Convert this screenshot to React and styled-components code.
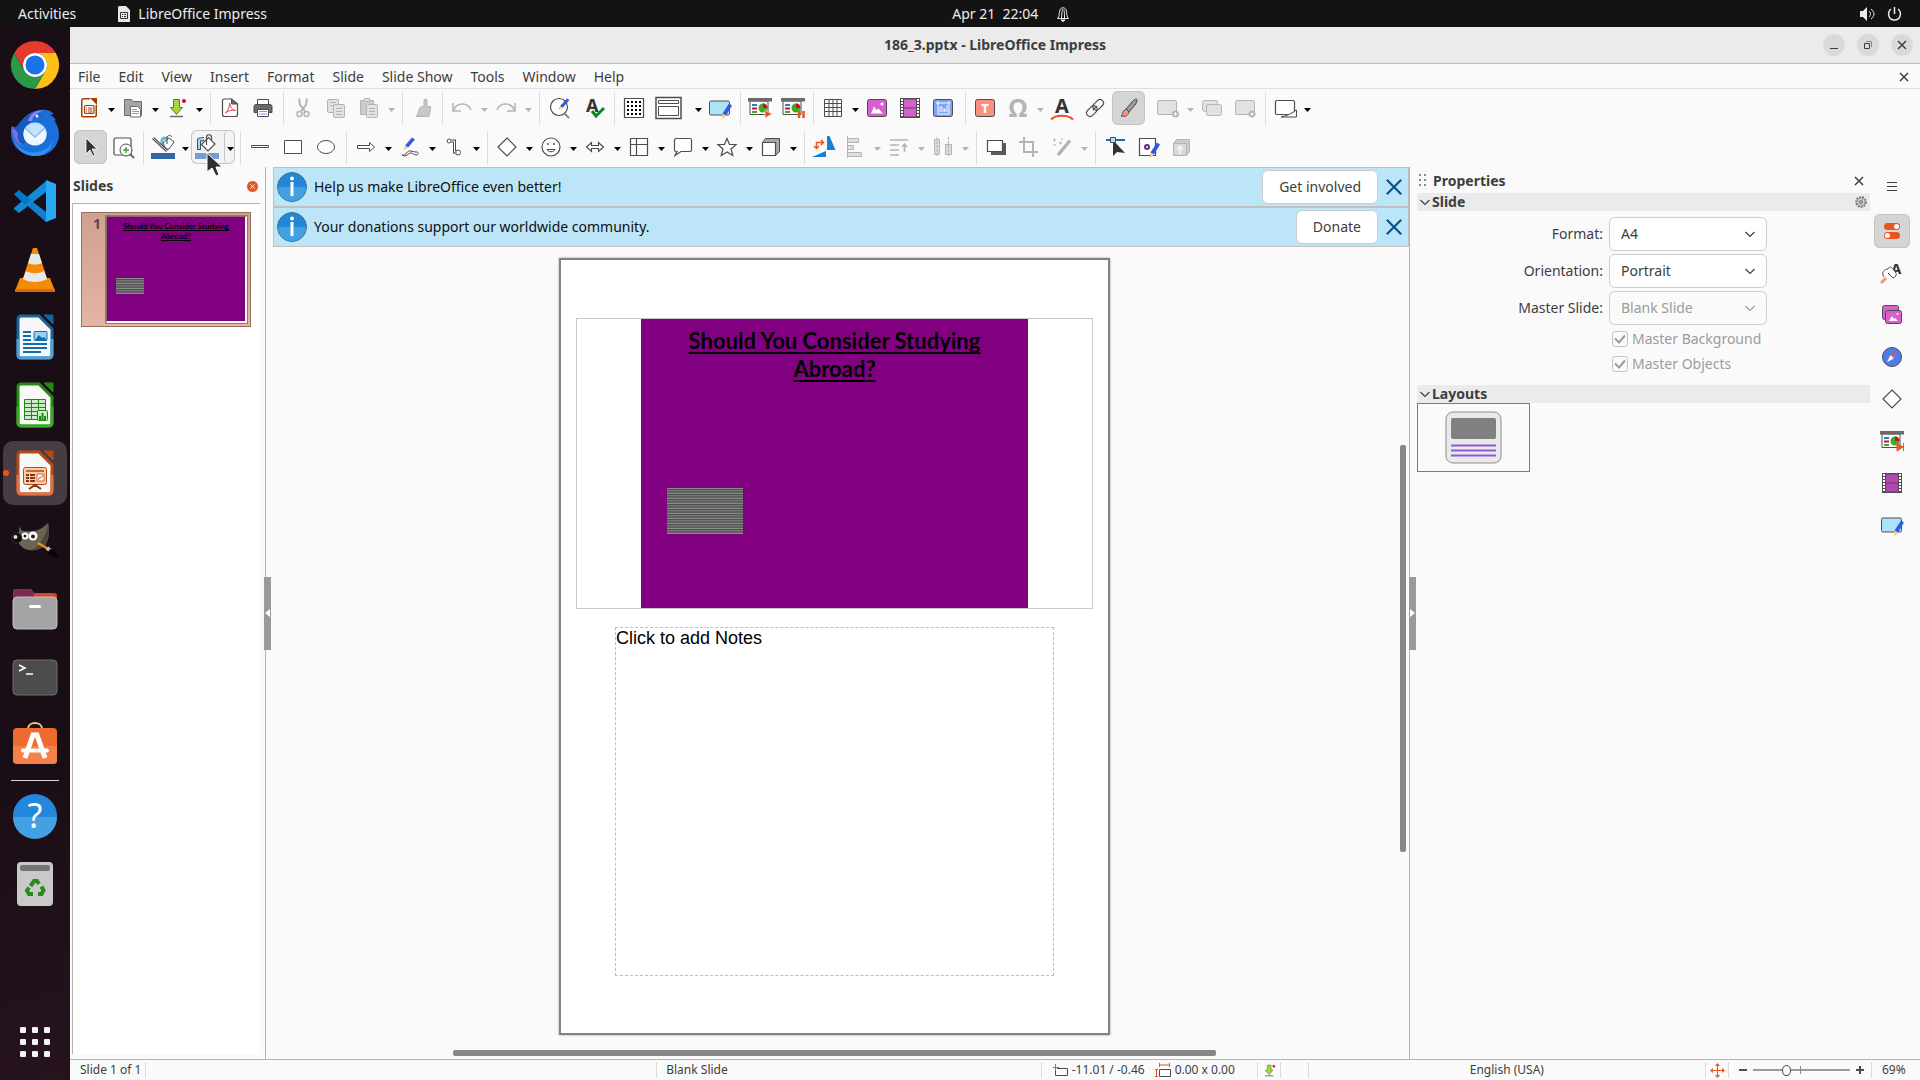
import { useState } from "react";
import styled, { createGlobalStyle, css } from "styled-components";

const GlobalStyle = createGlobalStyle`
  * {
    box-sizing: border-box;
  }

  body {
    margin: 0;
    overflow: hidden;
    background-color: #fafafa;
    color: #3d3d3d;
    font-family: "Noto Sans", "Open Sans", sans-serif;
    font-size: 14px;
    line-height: 20px;
  }

  button,
  select,
  input {
    margin: 0;
    padding: 0;
    border: none;
    background: none;
    color: inherit;
    font: inherit;
  }

  svg {
    display: block;
    flex: none;
    overflow: visible;
  }
`;

const Desktop = styled.div`
  display: flex;
  flex-direction: column;
  height: 100vh;
`;

const TopBar = styled.header`
  display: grid;
  grid-template-columns: 49.6% auto 1fr;
  align-items: center;
  height: 27px;
  background-color: #131313;
  color: #ececec;
`;

const TopLeft = styled.div`
  display: flex;
  align-items: center;
  gap: 42px;
  padding-left: 18px;
`;

const TopButton = styled.button`
  display: flex;
  align-items: center;
  gap: 8px;
`;

const Clock = styled.button`
  display: flex;
  align-items: center;
  gap: 18px;
  white-space: pre;
`;

const TopRight = styled.div`
  display: flex;
  justify-content: flex-end;
  gap: 12px;
  padding-right: 18px;
`;

const Workspace = styled.div`
  display: flex;
  flex: 1;
  min-height: 0;
`;

const Dock = styled.nav`
  display: flex;
  flex-direction: column;
  align-items: center;
  width: 70px;
  padding-top: 4px;
  background: linear-gradient(165deg, #1a0e16 70%, #26131f);
`;

const DockItem = styled.button`
  position: relative;
  display: grid;
  place-items: center;
  width: 64px;
  height: 64px;
  margin: 2px 0;
  border-radius: 10px;
  background-color: ${(props) => (props.$active ? "#463c42" : "transparent")};

  ${(props) =>
    props.$active &&
    css`
      &::before {
        content: "";
        position: absolute;
        left: 0;
        width: 6px;
        height: 6px;
        border-radius: 50%;
        background-color: #e95420;
      }
    `}
`;

const DockLine = styled.div`
  width: 48px;
  height: 1px;
  margin: 1px 0;
  background-color: #d8d8d8;
`;

const AppsButton = styled.button`
  display: grid;
  grid-template-columns: repeat(3, 6px);
  gap: 6px;
  margin-top: auto;
  margin-bottom: 23px;

  span {
    height: 6px;
    border-radius: 1px;
    background-color: #f2f2f2;
  }
`;

const Window = styled.main`
  display: flex;
  flex-direction: column;
  flex: 1;
  min-width: 0;
`;

const TitleBar = styled.div`
  display: grid;
  grid-template-columns: 1fr auto 1fr;
  align-items: center;
  height: 37px;
  border-bottom: 1px solid #bcbcbc;
  background-color: #ebebeb;
`;

const Title = styled.h1`
  grid-column: 2;
  margin: 0;
  font-size: 14px;
  font-weight: 700;
`;

const WindowButtons = styled.div`
  display: flex;
  justify-content: flex-end;
  gap: 12px;
  padding-right: 7px;
`;

const RoundButton = styled.button`
  display: grid;
  place-items: center;
  width: 22px;
  height: 22px;
  border-radius: 50%;
  background-color: #dadada;
`;

const MenuRow = styled.div`
  display: flex;
  align-items: center;
  height: 25px;
  padding: 1px 11px 0 0;
  border-bottom: 1px solid #dedede;
`;

const MenuButton = styled.button`
  padding: 0 9px;

  &:first-child {
    padding-left: 8px;
  }
`;

const CloseDoc = styled.button`
  margin-left: auto;
`;

const ToolRow = styled.div`
  display: flex;
  align-items: center;
  height: ${(props) => props.$height}px;
  padding-left: ${(props) => props.$start}px;
`;

const ToolButton = styled.button`
  display: flex;
  align-items: center;
  width: ${(props) => props.$width || 33}px;
  height: 34px;
  padding-left: 4px;
  border-radius: 6px;

  ${(props) =>
    props.$pressed &&
    css`
      background-color: #d5d5d5;
      box-shadow: inset 0 0 0 1px #c4c4c4;
    `}
`;

const ArrowButton = styled.button`
  display: grid;
  place-items: center;
  width: 11px;
  height: 34px;
  padding-top: 3px;
  color: ${(props) => (props.disabled ? "#b4b4b4" : "#000000")};
`;

const HoverPair = styled.div`
  display: flex;
  border-radius: 6px;
  background-color: #f3f3f3;
  box-shadow: inset 0 0 0 1px #c4c4c4;

  ${ArrowButton} {
    border-left: 1px solid #c4c4c4;
    border-radius: 6px;
  }
`;

const Separator = styled.div`
  width: 1px;
  height: 33px;
  margin: 0 3px;
  background-color: ${(props) => (props.$hidden ? "transparent" : "#dcdcdc")};

  ${ArrowButton} + &,
  ${HoverPair} + & {
    margin-left: 5px;
  }
`;

const Main = styled.div`
  display: flex;
  flex: 1;
  min-height: 0;
`;

const SlidePanel = styled.aside`
  display: flex;
  flex-direction: column;
  width: 194px;
  padding: 0 4px 5px 2px;
`;

const SlideHeader = styled.div`
  display: flex;
  justify-content: space-between;
  align-items: center;
  height: 36px;
  padding: 2px 2px 0 1px;
`;

const PanelTitle = styled.h2`
  margin: 0;
  font-size: 14px;
  line-height: 18px;
  font-weight: 700;
`;

const SlideList = styled.div`
  flex: 1;
  padding: 8px;
  border-top: 1px solid #b4b4b4;
  border-left: 1px solid #b4b4b4;
  background-color: #ffffff;
`;

const SlideItem = styled.button`
  display: flex;
  align-items: flex-start;
  justify-content: flex-end;
  width: 170px;
  height: 115px;
  padding: 3px 3px 0 0;
  border: 1px solid #9b6d60;
  background: linear-gradient(#d0a091, #e3b5a5);
`;

const SlideNumber = styled.span`
  padding-right: 5px;
  line-height: 16px;
  font-weight: 700;
  color: #5a4a46;
`;

const Thumb = styled.div`
  width: 141px;
  height: 107px;
  border: 1px solid #7e6a66;
  border-right: 2px solid #ffffff;
  border-bottom: 2px solid #ffffff;
  outline: 1px solid #8d7d79;
  background-color: #800080;
`;

const ThumbTitle = styled.div`
  padding: 4px 8px 0;
  font-family: Lato, sans-serif;
  font-size: 8px;
  line-height: 10px;
  font-weight: 700;
  text-align: center;
  text-decoration: underline;
  text-decoration-skip-ink: none;
  color: #000000;
`;

const Picture = styled.div`
  width: ${(props) => props.$width}px;
  height: ${(props) => props.$height}px;
  background: repeating-linear-gradient(
    #8a8a8a 0 1px,
    #505050 1px 2px,
    #767676 2px 3px,
    #606060 3px 5px
  );
`;

const ThumbPicture = styled(Picture)`
  margin: 37px 0 0 9px;
`;

const Splitter = styled.div`
  position: relative;
  display: flex;
  align-items: center;
  width: ${(props) => (props.$side === "left" ? 9 : 8)}px;

  &::before {
    content: "";
    position: absolute;
    top: 0;
    bottom: 0;
    left: ${(props) => (props.$side === "left" ? 1 : 0)}px;
    width: 1px;
    background-color: #b4b4b4;
  }
`;

const Grip = styled.button`
  position: relative;
  display: grid;
  place-items: center;
  width: 7px;
  height: 73px;
  background-color: #999999;
  color: #ffffff;
`;

const Editor = styled.section`
  display: flex;
  flex-direction: column;
  flex: 1;
  min-width: 0;
`;

const InfoBar = styled.div`
  display: flex;
  align-items: center;
  gap: 7px;
  height: 40px;
  padding: 0 5px 0 3px;
  border: 1px solid #c0c0c0;
  background-color: #bce5f7;
  color: #101010;
`;

const InfoText = styled.span`
  flex: 1;
`;

const InfoAction = styled.button`
  height: 34px;
  padding: 0 16px;
  border: 1px solid #cdcdcd;
  border-radius: 6px;
  background-color: #ffffff;
  color: #3d3d3d;
`;

const Canvas = styled.div`
  display: grid;
  grid-template-columns: 1fr 13px;
  grid-template-rows: 1fr 13px;
  flex: 1;
  min-height: 0;
`;

const PageArea = styled.div`
  display: grid;
  place-items: center;
  overflow: hidden;
`;

const Page = styled.article`
  width: 551px;
  height: 777px;
  padding: 58px 15px 0;
  border: 2px solid #828282;
  box-shadow: 0 0 2px #9a9a9a;
  background-color: #ffffff;
`;

const SlideFrame = styled.div`
  display: flex;
  justify-content: center;
  height: 291px;
  border: 1px solid #c9c9c9;
`;

const Slide = styled.div`
  width: 387px;
  background-color: #800080;
`;

const SlideTitle = styled.h3`
  margin: 0;
  padding: 8px 40px 0;
  font-family: Lato, sans-serif;
  font-size: 22px;
  line-height: 28px;
  font-weight: 700;
  text-align: center;
  text-decoration: underline;
  text-decoration-thickness: 2px;
  text-decoration-skip-ink: none;
  text-underline-offset: 3px;
  color: #000000;
`;

const SlidePicture = styled(Picture)`
  margin: 105px 0 0 26px;
`;

const Notes = styled.div`
  height: 349px;
  margin: 18px 39px 0;
  border: 1px dashed #bdbdbd;
  font-family: "Liberation Sans", Arial, sans-serif;
  font-size: 18px;
  color: #000000;
`;

const VerticalTrack = styled.div`
  display: flex;
  justify-content: center;

  div {
    width: 6px;
    height: 51%;
    margin-top: 198px;
    border-radius: 2px;
    background-color: #878787;
  }
`;

const HorizontalTrack = styled.div`
  display: flex;
  align-items: center;

  div {
    width: 68%;
    height: 6px;
    margin-left: 16%;
    border-radius: 2px;
    background-color: #878787;
  }
`;

const Properties = styled.aside`
  width: 453px;
  padding-top: 4px;
`;

const PropertiesHeader = styled.div`
  display: flex;
  align-items: center;
  height: 22px;
  padding: 0 6px 3px 2px;

  ${PanelTitle} {
    flex: 1;
    margin-left: 6px;
  }
`;

const SectionHeader = styled.div`
  display: flex;
  align-items: center;
  gap: 2px;
  height: 18px;
  padding: 0 3px;
  background-color: #ebebeb;

  ${PanelTitle} {
    flex: 1;
  }
`;

const Form = styled.div`
  display: grid;
  grid-template-columns: 186px 158px;
  column-gap: 6px;
  row-gap: 3px;
  align-items: center;
  padding: 6px 0 1px;
`;

const FieldLabel = styled.label`
  text-align: right;
`;

const SelectBox = styled.div`
  position: relative;
  color: ${(props) => (props.$disabled ? "#9c9c9c" : "#3d3d3d")};

  svg {
    position: absolute;
    top: 12px;
    right: 12px;
    pointer-events: none;
  }
`;

const Select = styled.select`
  appearance: none;
  width: 100%;
  height: 34px;
  padding: 0 11px;
  border: 1px solid #cdcdcd;
  border-radius: 6px;
  background-color: ${(props) => (props.disabled ? "#fafafa" : "#ffffff")};

  &:disabled {
    opacity: 1;
  }
`;

const Checks = styled.div`
  display: flex;
  flex-direction: column;
  gap: 5px;
  padding: 3px 0 11px 195px;
`;

const CheckLabel = styled.label`
  display: flex;
  align-items: center;
  gap: 4px;
  color: #9c9c9c;
`;

const CheckBox = styled.span`
  display: grid;
  place-items: center;

  input,
  svg {
    grid-area: 1 / 1;
  }

  input {
    appearance: none;
    width: 16px;
    height: 16px;
    border: 1px solid #c4c4c4;
    border-radius: 3px;
  }
`;

const LayoutTile = styled.button`
  display: grid;
  place-items: center;
  width: 113px;
  height: 69px;
  border: 1px solid #e95420;
`;

const TabBar = styled.nav`
  display: flex;
  flex-direction: column;
  align-items: center;
  gap: 8px;
  width: 50px;
  padding: 2px 6px 0 0;
`;

const TabButton = styled.button`
  display: grid;
  place-items: center;
  width: 36px;
  height: 34px;
  border-radius: 6px;

  &:first-child {
    margin-bottom: 3px;
  }

  ${(props) =>
    props.$active &&
    css`
      background-color: #d5d5d5;
      box-shadow: inset 0 0 0 1px #c4c4c4;
    `}
`;

const StatusBar = styled.footer`
  display: flex;
  align-items: center;
  height: 21px;
  border-top: 1px solid #b4b4b4;
  font-size: 12px;
`;

const Segment = styled.div`
  display: flex;
  align-items: center;
  justify-content: ${(props) => props.$align || "flex-start"};
  gap: 4px;
  flex: ${(props) => (props.$grow ? `${props.$grow} 1 0` : "none")};
  width: ${(props) => (props.$width ? `${props.$width}px` : "auto")};
  height: 16px;
  padding-left: ${(props) => props.$pad || 0}px;
  border-right: 1px solid ${(props) => (props.$open ? "transparent" : "#dcdcdc")};
  white-space: nowrap;
`;

const ZoomSlider = styled.input`
  appearance: none;
  width: 97px;
  height: 12px;
  margin: 0 2px;
  background:
    linear-gradient(#8a8a8a, #8a8a8a) 47px 2px / 1px 8px no-repeat,
    linear-gradient(#9a9a9a, #9a9a9a) 0 5px / 100% 2px no-repeat;

  &::-webkit-slider-thumb {
    appearance: none;
    width: 9px;
    height: 11px;
    border: 1px solid #4d4d4d;
    border-radius: 50%;
    background-color: #fafafa;
  }
`;

const Pointer = styled.svg`
  position: fixed;
  left: 206px;
  top: 152px;
  pointer-events: none;
`;

const dark = "#4d4d4d";

const Icon = ({ size = 24, width, children }) => (
  <svg
    width={width || size}
    height={size}
    viewBox={`0 0 ${width || 24} 24`}
    fill="none"
    stroke={dark}
    aria-hidden="true"
  >
    {children}
  </svg>
);

const Pencil = () => (
  <g stroke="none">
    <path d="M21 7.500l3 2-6 10-3.500-2z" fill="#2d5be3" />
    <path d="M14.500 17.500l3.500 2-4 4z" fill="#fcc98a" />
  </g>
);

const Board = ({ children }) => (
  <>
    <path d="M2 5v13.500h18V5z" fill="#ffffff" />
    <path d="M0 2h24v3.500H0z" fill="#6b6b6b" stroke="none" />
    <g stroke="none">
      <path d="M4 8h5v2H4z" fill="#1a7fd5" />
      <path d="M4 11.500h5v2H4z" fill="#c8102e" />
      <path d="M4 15h5v2H4z" fill="#43a820" />
      <circle cx="15" cy="12" r="4.500" fill="#43a820" />
      <path d="M15 12V7.500a4.500 4.500 0 0 1 4.500 4.500z" fill="#c8102e" />
    </g>
    {children}
  </>
);

const Film = ({ fill }) => (
  <>
    <path d="M2 2h20v20H2z" fill={dark} stroke="none" />
    <path d="M6 3.500h12v8H6zM6 12.500h12v8H6z" fill={fill} stroke="none" />
    <path d="M4 3v18M20 3v18" stroke="#ffffff" strokeWidth="2" strokeDasharray="2 1" />
  </>
);

const icons = {
  newDoc: (
    <g stroke="#a33e03" strokeWidth="1.500">
      <path d="M6.500 3h8l5 5v12.500h-13l-2-1V4z" fill="#fff" stroke="none" />
      <path d="M13 2.750H6.500a1.750 1.750 0 0 0-1.750 1.750v14.500a1.750 1.750 0 0 0 1.750 1.750h11a1.750 1.750 0 0 0 1.750-1.750V9" />
      <path d="M13 2h7v7z" fill="#a33e03" stroke="none" />
      <rect x="7.500" y="9.500" width="9.500" height="8" rx="1" strokeWidth="1.200" />
      <path d="M9 12h1m1 0h4.500M9 14h1m1 0h4.500M9 16h1m1 0h4.500" strokeWidth="1" />
    </g>
  ),
  open: (
    <>
      <path d="M3.500 19.500h17v-14h-8l-2-2h-7z" fill="#a6a6a6" stroke="#6b6b6b" />
      <path d="M9.500 10.500h7l3 3v7.500h-10z" fill="#ffffff" stroke="#6b6b6b" />
      <path d="M11 13.500h5M11 15.500h7M11 17.500h7" stroke="#8d8dff" />
    </>
  ),
  save: (
    <>
      <path d="M8.500 3.500h6v8h3l-6 7-6-7h3z" fill="#a5d63f" stroke="#5f7a2c" />
      <path d="M5 20.500h13" stroke="#6b6b6b" strokeWidth="1.500" />
      <circle cx="19" cy="5" r="2" fill="#c8102e" stroke="none" />
    </>
  ),
  pdf: (
    <>
      <path d="M13.500 3h-7a2 2 0 0 0-2 2v13.500a2 2 0 0 0 2 2h11a2 2 0 0 0 2-2V8z" fill="#ffffff" strokeWidth="1.200" />
      <path d="M13.500 3v5h6z" fill="#6b6b6b" />
      <path d="M11.500 7c1.500 5 3 7 6 7.500-3-1-7 0-10 2.500 3-3 4-6 4-10z" stroke="#ea3a50" />
    </>
  ),
  print: (
    <>
      <path d="M6.500 3.500h11v6h-11z" fill="#ffffff" />
      <path d="M5 8.500h14a2 2 0 0 1 2 2v6H3v-6a2 2 0 0 1 2-2z" fill="#6b6b6b" />
      <path d="M6.500 13.500h11v7h-11z" fill="#ffffff" />
      <path d="M8 15.500h8M8 18h8" stroke="#8d8dff" strokeWidth="1.200" />
    </>
  ),
  cut: (
    <g stroke="#b4b4b4" strokeWidth="1.500">
      <path d="M8 2.500l1 6 5 7M16 2.500l-1 6-5 7" strokeWidth="2" />
      <circle cx="8.500" cy="18" r="2.500" />
      <circle cx="15.500" cy="18" r="2.500" />
    </g>
  ),
  copy: (
    <g stroke="#b4b4b4" fill="#e2e2e2">
      <rect x="3.500" y="3.500" width="11" height="13" rx="1.500" />
      <rect x="9.500" y="8.500" width="11" height="13" rx="1.500" />
      <path d="M6 6.500h6M6 9.500h3M12 12.500h6M12 15.500h6M12 18.500h6" />
    </g>
  ),
  paste: (
    <g stroke="#b4b4b4" fill="#e2e2e2">
      <path d="M3.500 4.500h13v14h-13z" fill="#cccccc" />
      <path d="M7.500 2.500h5v3h-5z" />
      <rect x="9.500" y="8.500" width="11" height="13" rx="1" />
      <path d="M12 12.500h6M12 15.500h6M12 18.500h6" />
    </g>
  ),
  brush: (
    <path d="M14 3.500h3v7h3.500v3l-1.500 7H6c2-2 3-5 3-7l2-3h3z" fill="#c8c8c8" stroke="#b4b4b4" />
  ),
  undo: <path d="M3 7v8h8M3.500 14.500C6 7 17 5 21 14" stroke="#b4b4b4" strokeWidth="1.600" />,
  redo: <path d="M21 7v8h-8M20.500 14.500C18 7 7 5 3 14" stroke="#b4b4b4" strokeWidth="1.600" />,
  find: (
    <>
      <circle cx="12" cy="11" r="8.500" fill="#ffffff" strokeWidth="1.200" />
      <path d="M17 17l5 5" stroke="#8a8a8a" strokeWidth="2" />
      <path d="M20 2.500l2.500 1.500-7 8-2.500-2z" fill="#2d5be3" stroke="none" />
      <path d="M13 10l2.500 2-4.500 2z" fill="#fcc98a" stroke="none" />
    </>
  ),
  spell: (
    <>
      <text x="4" y="16" fontSize="18" fontWeight="700" fill="#333333" stroke="none">A</text>
      <path d="M10 15l4 5 8-8" stroke="#0b8a24" strokeWidth="3" />
    </>
  ),
  grid: (
    <>
      <path d="M2.500 2.500h19v19h-19z" fill="#ffffff" strokeWidth="1.200" />
      <path d="M5 6h15M5 10h15M5 14h15M5 18h15" stroke="#000000" strokeWidth="2" strokeDasharray="2 2" />
    </>
  ),
  display: (
    <>
      <path d="M1 1.500h25v21H1z" fill="#ffffff" strokeWidth="1.500" />
      <path d="M3.500 4.500h20v3h-20zM3.500 10.500h20v9h-20z" />
    </>
  ),
  master: (
    <>
      <rect x="1.500" y="5" width="20" height="14" rx="1.500" fill="#ace3f8" />
      <Pencil />
    </>
  ),
  play: (
    <Board>
      <path d="M17 14v8l7-4z" fill="#e95420" stroke="#fafafa" strokeWidth="0.500" />
    </Board>
  ),
  pause: (
    <Board>
      <path d="M18 15v7M22.500 15v7" stroke="#e95420" strokeWidth="2.500" />
    </Board>
  ),
  table: (
    <path d="M3.500 3.500h17v17h-17zM8 3v18M12 3v18M16 3v18M3 7.500h18M3 11.500h18M3 15.500h18" />
  ),
  image: (
    <>
      <rect x="2.500" y="3.500" width="19" height="17" rx="2" fill="#d75fcf" />
      <path d="M6 17.500l3-7 2.500 3.500 2-1.500 4.500 5z" fill="#ffffff" stroke="none" />
      <circle cx="17" cy="8" r="1.500" fill="#ffffff" stroke="none" />
    </>
  ),
  media: <Film fill="#d75fcf" />,
  chart: (
    <>
      <rect x="2.500" y="3.500" width="19" height="17" rx="2" fill="#7ea2f5" />
      <path d="M5 7h14M7 5v13h12M18 5v12M9 16v-5h2v5M13 16v-3h1v3M16 16V9" stroke="#ffffff" />
    </>
  ),
  textbox: (
    <>
      <rect x="2.500" y="3.500" width="19" height="17" rx="2" fill="#fb9080" />
      <text x="12" y="16.500" fontSize="13" fontWeight="800" textAnchor="middle" fill="#ffffff" stroke="none">T</text>
    </>
  ),
  omega: (
    <text x="12" y="21" fontSize="25" fontWeight="700" textAnchor="middle" fill="#b4b4b4" stroke="none">Ω</text>
  ),
  fontwork: (
    <>
      <text x="12" y="17" fontSize="20" fontWeight="700" textAnchor="middle" fill="#333333" stroke="none">A</text>
      <path d="M1 23.500c5-5 17-5 22 0" stroke="#e95420" strokeWidth="2" />
    </>
  ),
  link: (
    <g transform="rotate(-45 12 12)" strokeWidth="1.200">
      <rect x="1.500" y="8.500" width="12" height="7" rx="3.500" />
      <rect x="10.500" y="8.500" width="12" height="7" rx="3.500" />
      <path d="M9 12h6" />
    </g>
  ),
  draw: (
    <>
      <path d="M20 3c2 0 1 3-1 6l-6 7-3-3 6-7c2-2 3-3 4-3z" fill="#9a9a9a" />
      <path d="M10 13l3 3c-1 4-4 5-8 4 2-1 1-5 5-7z" fill="#fb9080" />
    </>
  ),
  newSlide: (
    <g stroke="#b4b4b4">
      <rect x="1.500" y="4.500" width="19" height="14" rx="1.500" fill="#e2e2e2" />
      <circle cx="19.500" cy="18" r="3.500" fill="#b4b4b4" stroke="none" />
      <path d="M17.500 18h4M19.500 16v4" stroke="#ffffff" />
    </g>
  ),
  duplicate: (
    <g stroke="#b4b4b4" fill="#e2e2e2">
      <rect x="2.500" y="4.500" width="15" height="11" rx="2" />
      <rect x="6.500" y="8.500" width="15" height="11" rx="2" />
    </g>
  ),
  deleteSlide: (
    <g stroke="#b4b4b4">
      <rect x="2.500" y="4.500" width="19" height="14" rx="1.500" fill="#e2e2e2" />
      <circle cx="19" cy="18" r="3.500" fill="#b4b4b4" stroke="none" />
      <path d="M17.500 16.500l3 3M20.500 16.500l-3 3" stroke="#ffffff" />
    </g>
  ),
  layout: (
    <>
      <rect x="2.500" y="4.500" width="19" height="14" rx="1.500" fill="#ffffff" strokeWidth="1.200" />
      <path d="M8 21c6-1 11-4 15.500-7v7z" fill="#fafafa" />
    </>
  ),
  select: (
    <path d="M8 3v16l4-4 3 6 2-1-3-6h5z" fill="#333333" stroke="#ffffff" strokeWidth="0.800" />
  ),
  zoom: (
    <>
      <rect x="3" y="3" width="17" height="17" rx="1.500" fill="#ffffff" strokeWidth="1.200" />
      <circle cx="15" cy="15" r="6" fill="#fafafa" />
      <path d="M19 19l4 4" stroke="#6b6b6b" strokeWidth="2" />
      <path d="M12 15h6M15 12v6" stroke="#43a820" strokeWidth="1.500" />
    </>
  ),
  lineColor: (
    <>
      <path d="M11 12V5c0-2 2-2 6-2" stroke="#6ab6d8" strokeWidth="3" />
      <path d="M12 8l6-5 5 4-5 7h-3z" fill="#ffffff" />
      <path d="M16 9V2c1-2 4-2 5 0" />
      <path d="M2 3l14 13" stroke={dark} strokeWidth="3" />
      <path d="M2 3l14 13" stroke="#d8d8d8" strokeWidth="1" />
      <path d="M0 18h24v6H0z" fill="#3465a4" stroke="none" />
    </>
  ),
  fillColor: (
    <>
      <path d="M4 15V5c1-1 3-1 5-1" stroke={dark} strokeWidth="4" />
      <path d="M4 14V5c1-1 3-1 5-1" stroke="#9fdcf5" strokeWidth="2" />
      <path d="M6.500 9.500l7-7 6.500 6.500-7 7z" fill="#ffffff" strokeWidth="1.200" />
      <path d="M11.500 10V2c0-3 5-3 5 0v3" strokeWidth="1.200" />
      <path d="M0 18h24v6H0z" fill="#729fcf" stroke="none" />
    </>
  ),
  line: <path d="M3.500 10.500h17v2h-17z" fill="#ffffff" />,
  rect: <path d="M3.500 5.500h17v13h-17z" fill="#ffffff" />,
  ellipse: <ellipse cx="12" cy="12" rx="8.500" ry="6.500" fill="#ffffff" />,
  arrowLine: <path d="M3.500 10.500h12v-3l5 4.500-5 4.500v-3h-12z" fill="#ffffff" />,
  curve: (
    <>
      <path d="M14 2.500l3 2-7 8-3-2z" fill="#2d5be3" stroke="none" />
      <path d="M7 10.500l3 2-5 3z" fill="#fcc98a" stroke="none" />
      <path d="M4 20c5 1 4-5 9-4 3 1 5 1 6 1s2 2 0 3c-4 0-5-3-7-2-3 2-5 4-8 2z" fill="#ffffff" />
    </>
  ),
  connector: (
    <>
      <circle cx="7" cy="6" r="2" fill="#ffffff" />
      <circle cx="16" cy="17.500" r="2.500" fill="#ffffff" />
      <path d="M9 6h3.500v11h2" strokeWidth="3" />
      <path d="M9 6h3.500v11h2" stroke="#ffffff" />
    </>
  ),
  diamond: <path d="M12 3l9 9-9 9-9-9z" fill="#ffffff" strokeWidth="1.200" />,
  smile: (
    <>
      <circle cx="12" cy="12" r="9" fill="#ffffff" strokeWidth="1.200" />
      <path d="M9 8v2M15 8v2" strokeWidth="1.500" />
      <path d="M8 14.500h8c-1 3-7 3-8 0z" />
    </>
  ),
  doubleArrow: (
    <path d="M3.500 12l5-4.500v3h7v-3l5 4.500-5 4.500v-3h-7v3z" fill="#ffffff" strokeWidth="1.200" />
  ),
  flow: <path d="M3.500 3.500h17v17h-17zM9.500 3.500v17M3.500 9.500h17" fill="#ffffff" strokeWidth="1.200" />,
  callout: (
    <path d="M5 3.500h14a1.500 1.500 0 0 1 1.500 1.500v10a1.500 1.500 0 0 1-1.500 1.500h-9l-6 4 2-4H5A1.500 1.500 0 0 1 3.500 15V5A1.500 1.500 0 0 1 5 3.500z" fill="#ffffff" strokeWidth="1.200" />
  ),
  star: (
    <path d="M12 3.500l2.500 6h6.500l-5 4.500 1.800 6.500L12 17l-5.800 3.500L8 14 3 9.500h6.500z" fill="#ffffff" strokeWidth="1.200" />
  ),
  cube: (
    <>
      <path d="M3.500 7.500l3-4h14v13l-4 4z" fill="#a6a6a6" />
      <path d="M3.500 7.500h13v13h-13z" fill="#ffffff" strokeWidth="1.200" />
    </>
  ),
  rotate: (
    <g stroke="none">
      <path d="M15 1h2.500l6 14H15z" fill="#1a7fd5" />
      <path d="M0 22l14-6v6z" fill="#1a7fd5" />
      <path d="M4.500 13V7.500H11M9 5l2.500 2.500L9 10M2 11l2.500 2.500L7 11" stroke="#e95420" strokeWidth="1.500" />
    </g>
  ),
  align: (
    <g stroke="#b4b4b4" fill="#dcdcdc">
      <path d="M4.500 1v22" />
      <path d="M4.500 3.500h11v4h-11zM4.500 10.500h6v4h-6zM4.500 17.500h14v4h-14z" />
    </g>
  ),
  arrange: (
    <path d="M3 5h18M3 10h9M3 15h9M3 20h9M17.500 17V9.500M15 12l2.500-3 2.500 3" stroke="#b4b4b4" strokeWidth="1.600" />
  ),
  distribute: (
    <g stroke="#b4b4b4" fill="#dcdcdc">
      <path d="M3.500 4.500h5v15h-5zM14.500 9.500h6v10h-6z" />
      <path d="M6 2v20M17.500 2v20" strokeDasharray="3 1" />
    </g>
  ),
  shadow: (
    <>
      <path d="M7 8h15v12H7z" fill="#5a5a5a" stroke="none" />
      <path d="M3.500 5.500h15v11h-15z" fill="#ffffff" strokeWidth="1.200" />
    </>
  ),
  crop: <path d="M7 2v15h14M2 7h14v15" stroke="#b4b4b4" strokeWidth="2" />,
  filter: (
    <>
      <path d="M20 5.500L8 20" stroke="#b4b4b4" strokeWidth="3.500" />
      <path d="M3 5h3M4.500 3.500v3M9 8h3M10.500 6.500v3M3 10h3M12 3v2" stroke="#b4b4b4" />
    </>
  ),
  points: (
    <>
      <path d="M3 5h19" stroke="#1c6ea4" strokeWidth="2" />
      <path d="M10 5v16l4-4 8 1z" fill="#333333" stroke="none" />
      <path d="M7.500 2.500h5v5h-5z" fill="#ace3f8" />
    </>
  ),
  glue: (
    <>
      <path d="M3.500 3.500h16v17h-16z" fill="#ffffff" strokeWidth="1.200" />
      <circle cx="11" cy="12" r="2" stroke="#6e2a7a" strokeWidth="2" />
      <Pencil />
    </>
  ),
  extrude: (
    <g stroke="#b4b4b4">
      <path d="M4.500 8.500l3-4h13v12l-3 4z" fill="#cccccc" />
      <path d="M4.500 8.500h13v12h-13z" fill="#d8d8d8" />
      <path d="M11 19v-7M8 14.500l3-3 3 3" stroke="#f2f2f2" strokeWidth="2" />
    </g>
  ),
  properties: (
    <g stroke="none">
      <rect x="4" y="4" width="16" height="7" rx="3.500" fill="#e95420" />
      <rect x="4" y="13" width="16" height="7" rx="3.500" fill="#e95420" />
      <circle cx="16.500" cy="7.500" r="2.500" fill="#ffffff" />
      <circle cx="7.500" cy="16.500" r="2.500" fill="#ffffff" />
    </g>
  ),
  styles: (
    <>
      <text x="11" y="13" fontSize="15" fontWeight="700" fill="#333333" stroke="none">A</text>
      <path d="M1 22l5-5" stroke="#fb9080" strokeWidth="3" />
      <path d="M4 16c-3-4 0-8 4-8 1-3 4-2 5 0l3 4c1 2-1 5-3 5l-5-5" fill="#ffffff" />
    </>
  ),
  gallery: (
    <>
      <rect x="2.500" y="2.500" width="16" height="14" rx="2" fill="#d75fcf" />
      <rect x="5.500" y="7.500" width="16" height="13" rx="2" fill="#d75fcf" />
      <path d="M9 18l3-5 2 3 1-1 3 3z" fill="#ffffff" stroke="none" />
      <circle cx="17.500" cy="11" r="1" fill="#ffffff" stroke="none" />
    </>
  ),
  navigator: (
    <>
      <circle cx="12" cy="12" r="9.500" fill="#4f7cea" />
      <path d="M16 7l-3 7-6 3 3-6z" fill="#ffffff" stroke="none" />
      <path d="M17 6l-4 7-2-3z" fill="#d9455f" stroke="none" />
    </>
  ),
  transition: (
    <Board>
      <path d="M17 14v8l6-4zM23.500 14v8" fill="#e95420" stroke="#e95420" />
    </Board>
  ),
  animation: <Film fill="#b544b5" />,
};

const Cross = ({ size, width = 1.5, color = "#3d3d3d" }) => (
  <svg width={size} height={size} viewBox="0 0 10 10" stroke={color} strokeWidth={width} aria-hidden="true">
    <path d="M1 1l8 8M9 1l-8 8" />
  </svg>
);

const Chevron = ({ size = 10 }) => (
  <svg width={size} height={size} viewBox="0 0 10 10" fill="none" stroke="currentColor" aria-hidden="true">
    <path d="M0.500 3L5 7.500 9.500 3" strokeWidth="1.200" />
  </svg>
);

const Tool = ({ name, label, arrow, disabled, pressed, hover, width }) => {
  const button = (
    <ToolButton aria-label={label} disabled={disabled} $pressed={pressed} $width={width}>
      <Icon width={name === "display" ? 27 : undefined}>{icons[name]}</Icon>
    </ToolButton>
  );

  if (!arrow) return button;

  const drop = (
    <ArrowButton aria-label={`${label} options`} disabled={disabled}>
      <svg width="7" height="4" viewBox="0 0 7 4" aria-hidden="true">
        <path d="M0 0h7L3.500 4z" fill="currentColor" />
      </svg>
    </ArrowButton>
  );

  return hover ? (
    <HoverPair>
      {button}
      {drop}
    </HoverPair>
  ) : (
    <>
      {button}
      {drop}
    </>
  );
};

const SEP = { sep: true };

const standardTools = [
  { name: "newDoc", label: "New", arrow: true },
  { name: "open", label: "Open", arrow: true },
  { name: "save", label: "Save", arrow: true },
  SEP,
  { name: "pdf", label: "Export as PDF" },
  { name: "print", label: "Print" },
  SEP,
  { name: "cut", label: "Cut", disabled: true },
  { name: "copy", label: "Copy", disabled: true },
  { name: "paste", label: "Paste", disabled: true, arrow: true },
  SEP,
  { name: "brush", label: "Clone formatting", disabled: true },
  SEP,
  { name: "undo", label: "Undo", disabled: true, arrow: true },
  { name: "redo", label: "Redo", disabled: true, arrow: true },
  SEP,
  { name: "find", label: "Find and replace", width: 35 },
  { name: "spell", label: "Spelling" },
  SEP,
  { name: "grid", label: "Display grid" },
  { name: "display", label: "Display views", arrow: true, width: 42 },
  { name: "master", label: "Master slide" },
  SEP,
  { name: "play", label: "Start from first slide" },
  { name: "pause", label: "Start from current slide" },
  SEP,
  { name: "table", label: "Table", arrow: true },
  { name: "image", label: "Image" },
  { name: "media", label: "Audio or video" },
  { name: "chart", label: "Chart", width: 35 },
  SEP,
  { name: "textbox", label: "Text box" },
  { name: "omega", label: "Special character", disabled: true, arrow: true },
  { name: "fontwork", label: "Fontwork" },
  { name: "link", label: "Hyperlink" },
  { name: "draw", label: "Show draw functions", pressed: true },
  { sep: true, hidden: true },
  { name: "newSlide", label: "New slide", disabled: true, arrow: true },
  { name: "duplicate", label: "Duplicate slide", disabled: true },
  { name: "deleteSlide", label: "Delete slide", disabled: true },
  SEP,
  { name: "layout", label: "Slide layout", arrow: true },
];

const drawingTools = [
  { name: "select", label: "Select", pressed: true },
  { name: "zoom", label: "Zoom and pan" },
  SEP,
  { name: "lineColor", label: "Line color", arrow: true },
  { name: "fillColor", label: "Fill color", arrow: true, hover: true },
  SEP,
  { name: "line", label: "Line" },
  { name: "rect", label: "Rectangle" },
  { name: "ellipse", label: "Ellipse" },
  SEP,
  { name: "arrowLine", label: "Lines and arrows", arrow: true },
  { name: "curve", label: "Curves and polygons", arrow: true },
  { name: "connector", label: "Connectors", arrow: true },
  SEP,
  { name: "diamond", label: "Basic shapes", arrow: true },
  { name: "smile", label: "Symbol shapes", arrow: true },
  { name: "doubleArrow", label: "Block arrows", arrow: true },
  { name: "flow", label: "Flowchart", arrow: true },
  { name: "callout", label: "Callouts", arrow: true },
  { name: "star", label: "Stars and banners", arrow: true },
  { name: "cube", label: "3D objects", arrow: true },
  SEP,
  { name: "rotate", label: "Rotate", width: 31 },
  { name: "align", label: "Align", disabled: true, arrow: true },
  { name: "arrange", label: "Arrange", disabled: true, arrow: true },
  { name: "distribute", label: "Distribute", disabled: true, arrow: true },
  SEP,
  { name: "shadow", label: "Shadow" },
  { name: "crop", label: "Crop", disabled: true },
  { name: "filter", label: "Filter", disabled: true, arrow: true },
  SEP,
  { name: "points", label: "Points" },
  { name: "glue", label: "Glue points" },
  { name: "extrude", label: "Toggle extrusion", disabled: true },
];

const renderTools = (tools) =>
  tools.map((tool, index) =>
    tool.sep ? <Separator key={index} $hidden={tool.hidden} /> : <Tool key={tool.name} {...tool} />
  );

const menus = ["File", "Edit", "View", "Insert", "Format", "Slide", "Slide Show", "Tools", "Window", "Help"];

const tabs = [
  ["properties", "Properties"],
  ["styles", "Styles"],
  ["gallery", "Gallery"],
  ["navigator", "Navigator"],
  ["diamond", "Shapes"],
  ["transition", "Slide Transition"],
  ["animation", "Animation"],
  ["master", "Master Slides"],
];

const OfficeDoc = ({ color, light, children }) => (
  <>
    <path d="M10 3h18l13 13v26a3 3 0 0 1-3 3H10a3 3 0 0 1-3-3V6a3 3 0 0 1 3-3z" fill="#f8f8f8" stroke={color} strokeWidth="3" />
    <path d="M7 26v16a3 3 0 0 0 3 3h28a3 3 0 0 0 3-3V26" fill="none" stroke={light} strokeWidth="3" />
    <path d="M33 2h9v9z" fill={color} stroke={color} strokeLinejoin="round" />
    {children}
  </>
);

const dockApps = [
  {
    name: "Chrome",
    art: (
      <>
        <path d="M24 12h20.800A24 24 0 0 0 3.200 12l10.400 18A12 12 0 0 1 24 12z" fill="#e33b2e" />
        <path d="M24 12h20.800A24 24 0 0 1 24 48l10.400-18A12 12 0 0 0 24 12z" fill="#fdc116" />
        <path d="M34.400 30L24 48A24 24 0 0 1 3.200 12l10.400 18a12 12 0 0 0 20.800 0z" fill="#2a9a48" />
        <circle cx="24" cy="24" r="12" fill="#ffffff" />
        <circle cx="24" cy="24" r="9.500" fill="#1a73e8" />
      </>
    ),
  },
  {
    name: "Thunderbird",
    art: (
      <>
        <path d="M1 17c2 2 4 2 6-1C14 7 19 2 30 1c6-1 10 1 13 4l-4 1c3 1 5 3 6 6l-2-1c3 4 5 9 5 14 0 13-10 22-23 22C11 47 1 38 0 26c0-4 0-7 1-9z" fill="#1b6fd8" />
        <path d="M1 17c0 8 5 14 12 18l5-20c3-6 8-8 14-8-7-5-18-2-25 9-2 3-4 3-6 1z" fill="#1659bd" />
        <path d="M17 12C19 5 25 1 32 1c-6 3-10 6-11 11z" fill="#9a80f2" />
        <path d="M3 30c4 10 13 15 24 13 7-1 13-6 15-12-1 10-8 16-18 16C13 47 5 40 3 30z" fill="#2f93f5" />
        <path d="M1 17l6 7c-1 5 1 10 5 14C5 34 1 27 1 17z" fill="#7b6ce8" />
        <circle cx="24" cy="25" r="11.500" fill="#c4e2fb" />
        <path d="M14 19l10 9 10-9c4 8 0 17-10 17s-14-9-10-17z" fill="#eef7ff" />
        <path d="M14 19l10 9 10-9" fill="none" stroke="#8fbde6" strokeWidth="1.500" />
        <circle cx="26" cy="7" r="1.500" fill="#e6f3ff" />
      </>
    ),
  },
  {
    name: "Visual Studio Code",
    art: (
      <>
        <path d="M4 17l4-3 27 21v10L3 17z" fill="#0f7fce" />
        <path d="M3 32l5 4 27-21V4L3 31z" fill="#1588d6" />
        <path d="M3 17l5-4 12 10-6 5z" fill="#0078c8" />
        <path d="M35 3l10 4v34l-10 4z" fill="#28a9f2" />
      </>
    ),
  },
  {
    name: "VLC",
    art: (
      <>
        <path d="M9 33h30l5 13H4z" fill="#f58a07" />
        <path d="M4 44h40v3H4z" fill="#d96b00" />
        <path d="M22 3h4l11 33c-6 4-20 4-26 0z" fill="#f58a07" />
        <path d="M20 9h8l3 9c-4 2-10 2-14 0zM15 26c5 3 13 3 18 0l3 8c-6 4-18 4-24 0z" fill="#e6e9ea" />
      </>
    ),
  },
  {
    name: "Writer",
    art: (
      <OfficeDoc color="#14659c" light="#4da3d6">
        <path d="M12 19h8M12 23h8M12 27h8M12 31h24M12 35h24M12 39h18" stroke="#0d6eb0" strokeWidth="2" />
        <rect x="23" y="18.500" width="13" height="9" rx="1" fill="#9bd0f0" stroke="#0d6eb0" />
        <path d="M24 27l4-5 3 3 2-1 3 3z" fill="#0d6eb0" />
      </OfficeDoc>
    ),
  },
  {
    name: "Calc",
    art: (
      <OfficeDoc color="#238a13" light="#3aab28">
        <path d="M13.500 18.500h21v20h-21z" fill="#ccebc8" />
        <path d="M13.500 18.500h21v20h-21zM13 22.500h22M13 26.500h22M13 30.500h22M13 34.500h22M20.500 18v21M27.500 18v21" fill="none" stroke="#1d8a0f" />
        <rect x="26.500" y="29.500" width="10" height="10" rx="1" fill="#ccebc8" stroke="#1d8a0f" />
        <path d="M29 39v-4M31.500 39v-7M34 39v-4" stroke="#1d8a0f" strokeWidth="2" />
      </OfficeDoc>
    ),
  },
  {
    name: "Impress",
    active: true,
    art: (
      <OfficeDoc color="#b54a12" light="#e07040">
        <rect x="12.500" y="18.500" width="23" height="17" rx="2" fill="#f6cdb6" stroke="#b54a12" />
        <path d="M15 22h18" stroke="#d9641f" strokeWidth="2" />
        <path d="M15 26h3M15 29h3M15 32h3M19 26h5M19 29h5M19 32h5" stroke="#8a3508" strokeWidth="2" />
        <path d="M26 25h7v7h-7z" fill="#ffffff" stroke="#d9641f" />
        <path d="M27 31l2-3 1 1 2-3" stroke="#d9641f" fill="none" />
        <path d="M24 35v3M18 40l6-4 6 4" stroke="#8a3508" strokeWidth="2" fill="none" />
      </OfficeDoc>
    ),
  },
  {
    name: "GIMP",
    art: (
      <>
        <path d="M9 9c1 5 3 6 8 5 8 1 14-2 20-8 2 6 1 16-2 21-5 7-19 9-25 2-3-3-4-6-1-20z" fill="#6b6353" />
        <path d="M37 6c2 6 1 16-2 21-3 4-9 6-14 6 8-4 14-14 16-27z" fill="#4d473b" />
        <circle cx="14" cy="19" r="3.500" fill="#ffffff" />
        <circle cx="22" cy="19" r="4.500" fill="#ffffff" />
        <circle cx="14" cy="19" r="1.500" fill="#222222" />
        <circle cx="22" cy="19.500" r="2" fill="#222222" />
        <circle cx="6" cy="21" r="5" fill="#0a0a0a" stroke="#55504a" strokeWidth="0.500" />
        <circle cx="4.500" cy="20" r="2" fill="#dddddd" />
        <path d="M27 26l12 7" stroke="#f08c1a" strokeWidth="2.500" />
        <path d="M36 31l4 3" stroke="#c0c0c0" strokeWidth="4" />
        <path d="M39 32c4 0 7 4 8 9-5-1-9-3-10-6z" fill="#050505" />
      </>
    ),
  },
  {
    name: "Files",
    art: (
      <>
        <path d="M5 4h15l3 4h20a3 3 0 0 1 3 3v8H2V7a3 3 0 0 1 3-3z" fill="#d6452a" />
        <path d="M5 4h15l3 4v10H2V7a3 3 0 0 1 3-3z" fill="#7d2b50" />
        <rect x="2" y="12" width="44" height="32" rx="4" fill="#a4a4a4" stroke="#bfbfbf" />
        <rect x="18" y="20" width="12" height="3" rx="1.500" fill="#ffffff" />
      </>
    ),
  },
  {
    name: "Terminal",
    art: (
      <>
        <rect x="2" y="7" width="44" height="35" rx="4" fill="#4c4c4c" stroke="#6e6e6e" />
        <path d="M8 12l6 3-6 3M15 21h7" fill="none" stroke="#ffffff" strokeWidth="1.500" />
      </>
    ),
  },
  {
    name: "Software",
    art: (
      <>
        <path d="M17 8c0-8 14-8 14 0" fill="none" stroke="#f5c27c" strokeWidth="2" />
        <rect x="2" y="7" width="44" height="36" rx="4" fill="#ef6a30" />
        <path d="M2 25h44v14a4 4 0 0 1-4 4H6a4 4 0 0 1-4-4z" fill="#f58048" />
        <path d="M14 37l8-23h4l8 23" fill="none" stroke="#ffffff" strokeWidth="5" />
        <path d="M12 29.500h24" stroke="#ffffff" strokeWidth="4" strokeLinecap="round" />
      </>
    ),
  },
];

const dockPlaces = [
  {
    name: "Help",
    art: (
      <>
        <circle cx="24" cy="24" r="22" fill="#2388dc" />
        <path d="M2 25h44a22 22 0 0 1-44 0z" fill="#43a0e2" />
        <text x="24" y="36" fontSize="34" textAnchor="middle" fill="#ffffff">?</text>
      </>
    ),
  },
  {
    name: "Trash",
    art: (
      <>
        <rect x="6" y="2" width="36" height="44" rx="4" fill="#c9c9c9" />
        <rect x="9" y="5" width="30" height="6" rx="2" fill="#757575" />
        <g fill="none" stroke="#2a8a1e" strokeWidth="4">
          <path d="M19.500 26l3.500-5h3l2 3" />
          <path d="M30.500 26.500l2 4-2 3.500H27" />
          <path d="M22 34h-4l-2-3.500 2-3" />
        </g>
      </>
    ),
  },
];

const DockIcon = ({ app }) => (
  <DockItem aria-label={app.name} $active={app.active}>
    <svg width="48" height="48" viewBox="0 0 48 48" aria-hidden="true">
      {app.art}
    </svg>
  </DockItem>
);

const InfoIcon = () => (
  <svg width="30" height="30" viewBox="0 0 30 30" aria-hidden="true">
    <circle cx="15" cy="15" r="14.500" fill="#2285d8" stroke="#3f7090" />
    <path d="M1 15h28a14 14 0 0 1-28 0z" fill="#42a0e0" />
    <path d="M15 10v14" stroke="#ffffff" strokeWidth="3" />
    <circle cx="15" cy="6.500" r="2" fill="#ffffff" />
  </svg>
);

function App() {
  const [zoom, setZoom] = useState(33);
  const [format, setFormat] = useState("A4");
  const [orientation, setOrientation] = useState("Portrait");

  return (
    <Desktop>
      <GlobalStyle />
      <TopBar>
        <TopLeft>
          <TopButton>Activities</TopButton>
          <TopButton>
            <svg width="12" height="16" viewBox="0 0 12 16" fill="none" aria-hidden="true">
              <path d="M1 0h7l4 4v12H0V1z" fill="#e8e8e8" />
              <path d="M2.500 6.500h7v6h-7zM4 8.500h1m1 0h2M4 10.500h1m1 0h2" stroke="#333333" />
            </svg>
            LibreOffice Impress
          </TopButton>
        </TopLeft>
        <Clock>
          {"Apr 21  22:04"}
          <svg width="14" height="16" viewBox="0 0 14 16" fill="none" stroke="#ececec" aria-hidden="true">
            <path d="M1.500 12.500c2-2 1.500-4 2-7 .5-5 6.500-5 7 0 .5 3 0 5 2 7z" />
            <path d="M5.500 12c.5-4 0-7 1.500-9M8.500 12c0-3 0-6-.5-8" />
            <path d="M5 14h4l-2 1.500z" fill="#ececec" />
          </svg>
        </Clock>
        <TopRight>
          <svg width="15" height="16" viewBox="0 0 15 16" fill="none" stroke="#ececec" aria-hidden="true">
            <path d="M0 5h3l4-4v14l-4-4H0z" fill="#ececec" stroke="none" />
            <path d="M9 5c2 2 2 4 0 6M11 3c4 3 4 7 0 10" />
          </svg>
          <svg width="15" height="16" viewBox="0 0 15 16" fill="none" stroke="#ececec" strokeWidth="1.500" aria-hidden="true">
            <path d="M7.500 1v7M4 3c-4 3-3 11 3.500 11S15 6 11 3" />
          </svg>
        </TopRight>
      </TopBar>

      <Workspace>
        <Dock>
          {dockApps.map((app) => (
            <DockIcon key={app.name} app={app} />
          ))}
          <DockLine />
          {dockPlaces.map((app) => (
            <DockIcon key={app.name} app={app} />
          ))}
          <AppsButton aria-label="Show applications">
            {Array.from({ length: 9 }, (_, index) => (
              <span key={index} />
            ))}
          </AppsButton>
        </Dock>

        <Window>
          <TitleBar>
            <Title>186_3.pptx - LibreOffice Impress</Title>
            <WindowButtons>
              <RoundButton aria-label="Minimize">
                <svg width="10" height="10" viewBox="0 0 10 10" aria-hidden="true">
                  <path d="M1 8.500h8" stroke="#3d3d3d" />
                </svg>
              </RoundButton>
              <RoundButton aria-label="Restore">
                <svg width="10" height="10" viewBox="0 0 10 10" fill="none" stroke="#3d3d3d" aria-hidden="true">
                  <path d="M1.500 3.500h5v5h-5z" />
                  <path d="M3 1.500h5.500V7" stroke="#8a8a8a" />
                </svg>
              </RoundButton>
              <RoundButton aria-label="Close">
                <Cross size={10} />
              </RoundButton>
            </WindowButtons>
          </TitleBar>

          <MenuRow>
            {menus.map((menu) => (
              <MenuButton key={menu}>{menu}</MenuButton>
            ))}
            <CloseDoc aria-label="Close document">
              <Cross size={10} />
            </CloseDoc>
          </MenuRow>

          <ToolRow $height={38} $start={3}>
            {renderTools(standardTools)}
          </ToolRow>
          <ToolRow $height={40} $start={4}>
            {renderTools(drawingTools)}
          </ToolRow>

          <Main>
            <SlidePanel>
              <SlideHeader>
                <PanelTitle>Slides</PanelTitle>
                <button aria-label="Close slide panel">
                  <svg width="11" height="11" viewBox="0 0 11 11" aria-hidden="true">
                    <circle cx="5.500" cy="5.500" r="5.500" fill="#e95420" />
                    <path d="M3.500 3.500l4 4M7.500 3.500l-4 4" stroke="#ffffff" />
                  </svg>
                </button>
              </SlideHeader>
              <SlideList>
                <SlideItem>
                  <SlideNumber>1</SlideNumber>
                  <Thumb>
                    <ThumbTitle>Should You Consider Studying Abroad?</ThumbTitle>
                    <ThumbPicture $width={28} $height={16} />
                  </Thumb>
                </SlideItem>
              </SlideList>
            </SlidePanel>

            <Splitter $side="left">
              <Grip aria-label="Hide slide panel">
                <svg width="5" height="8" viewBox="0 0 5 8" aria-hidden="true">
                  <path d="M5 0v8L0 4z" fill="currentColor" />
                </svg>
              </Grip>
            </Splitter>

            <Editor>
              <InfoBar>
                <InfoIcon />
                <InfoText>Help us make LibreOffice even better!</InfoText>
                <InfoAction>Get involved</InfoAction>
                <button aria-label="Close infobar">
                  <Cross size={18} width={1.2} color="#0b4f8a" />
                </button>
              </InfoBar>
              <InfoBar>
                <InfoIcon />
                <InfoText>Your donations support our worldwide community.</InfoText>
                <InfoAction>Donate</InfoAction>
                <button aria-label="Close infobar">
                  <Cross size={18} width={1.2} color="#0b4f8a" />
                </button>
              </InfoBar>

              <Canvas>
                <PageArea>
                  <Page>
                    <SlideFrame>
                      <Slide>
                        <SlideTitle>Should You Consider Studying Abroad?</SlideTitle>
                        <SlidePicture $width={76} $height={46} />
                      </Slide>
                    </SlideFrame>
                    <Notes>Click to add Notes</Notes>
                  </Page>
                </PageArea>
                <VerticalTrack>
                  <div />
                </VerticalTrack>
                <HorizontalTrack>
                  <div />
                </HorizontalTrack>
              </Canvas>
            </Editor>

            <Splitter $side="right">
              <Grip aria-label="Hide sidebar">
                <svg width="5" height="8" viewBox="0 0 5 8" aria-hidden="true">
                  <path d="M0 0v8l5-4z" fill="currentColor" />
                </svg>
              </Grip>
            </Splitter>

            <Properties>
              <PropertiesHeader>
                <svg width="8" height="13" viewBox="0 0 8 13" fill="#8a8a8a" aria-hidden="true">
                  <path d="M0 0h2v2H0zM5 0h2v2H5zM0 5h2v2H0zM5 5h2v2H5zM0 10h2v2H0zM5 10h2v2H5z" />
                </svg>
                <PanelTitle>Properties</PanelTitle>
                <button aria-label="Close sidebar deck">
                  <Cross size={10} />
                </button>
              </PropertiesHeader>

              <SectionHeader>
                <Chevron />
                <PanelTitle>Slide</PanelTitle>
                <svg width="12" height="12" viewBox="0 0 12 12" fill="none" stroke="#6b6b6b" aria-hidden="true">
                  <circle cx="6" cy="6" r="5" strokeWidth="1.500" strokeDasharray="2 1" />
                  <circle cx="6" cy="6" r="4" fill="#d0d0d0" stroke="#9a9a9a" />
                  <circle cx="6" cy="6" r="1.500" />
                </svg>
              </SectionHeader>
              <Form>
                <FieldLabel htmlFor="format">Format:</FieldLabel>
                <SelectBox>
                  <Select id="format" value={format} onChange={(e) => setFormat(e.target.value)}>
                    <option>A4</option>
                  </Select>
                  <Chevron />
                </SelectBox>
                <FieldLabel htmlFor="orientation">Orientation:</FieldLabel>
                <SelectBox>
                  <Select
                    id="orientation"
                    value={orientation}
                    onChange={(e) => setOrientation(e.target.value)}
                  >
                    <option>Portrait</option>
                  </Select>
                  <Chevron />
                </SelectBox>
                <FieldLabel htmlFor="master">Master Slide:</FieldLabel>
                <SelectBox $disabled>
                  <Select id="master" disabled>
                    <option>Blank Slide</option>
                  </Select>
                  <Chevron />
                </SelectBox>
              </Form>
              <Checks>
                {["Master Background", "Master Objects"].map((text) => (
                  <CheckLabel key={text}>
                    <CheckBox>
                      <input type="checkbox" defaultChecked disabled />
                      <svg width="12" height="10" viewBox="0 0 12 10" fill="none" stroke="#9c9c9c" aria-hidden="true">
                        <path d="M1 4.500L5 8.500 11 1.500" strokeWidth="2" />
                      </svg>
                    </CheckBox>
                    {text}
                  </CheckLabel>
                ))}
              </Checks>

              <SectionHeader>
                <Chevron />
                <PanelTitle>Layouts</PanelTitle>
              </SectionHeader>
              <LayoutTile aria-label="Notes layout">
                <svg width="57" height="53" viewBox="0 0 57 53" aria-hidden="true">
                  <rect x="1" y="1" width="55" height="51" rx="7" fill="#e9e9e9" stroke="#8c8c8c" />
                  <rect x="6" y="7" width="45" height="21" rx="2" fill="#808080" />
                  <path d="M6 34.500h45M6 39.500h45M6 44.500h45" stroke="#8e5bd8" strokeWidth="2" />
                </svg>
              </LayoutTile>
            </Properties>

            <TabBar>
              <TabButton aria-label="Sidebar settings">
                <svg width="10" height="11" viewBox="0 0 10 11" stroke="#3d3d3d" aria-hidden="true">
                  <path d="M0 1.500h10M0 5.500h10M0 9.500h10" />
                </svg>
              </TabButton>
              {tabs.map(([name, label]) => (
                <TabButton key={name} aria-label={label} $active={name === "properties"}>
                  <Icon>{icons[name]}</Icon>
                </TabButton>
              ))}
            </TabBar>
          </Main>

          <StatusBar>
            <Segment $width={76} $pad={10}>Slide 1 of 1</Segment>
            <Segment $grow={515} />
            <Segment $grow={378} $pad={9}>Blank Slide</Segment>
            <Segment $width={216} $pad={11}>
              <svg width="15" height="13" viewBox="0 0 15 13" fill="none" aria-hidden="true">
                <path d="M4 4.500h10.500v7h-12V7" stroke="#4d4d4d" />
                <path d="M0 3.500h6M2.500 0v7" stroke="#e95420" />
              </svg>
              -11.01 / -0.46
              <Segment $open $pad={6}>
                <svg width="16" height="14" viewBox="0 0 16 14" fill="none" aria-hidden="true">
                  <path d="M4.500 6.500h11v7h-11z" stroke="#4d4d4d" />
                  <path d="M4.500 0v4M14.500 0v4M5 2h9M0 6.500h3M0 13.500h3M1.500 7v6" stroke="#e95420" />
                </svg>
                0.00 x 0.00
              </Segment>
            </Segment>
            <Segment $width={23} $pad={4}>
              <Icon size={15}>{icons.save}</Icon>
            </Segment>
            <Segment $width={28} />
            <Segment $grow={400} $align="center">English (USA)</Segment>
            <Segment $width={23} $pad={4}>
              <svg width="15" height="15" viewBox="0 0 15 15" fill="#e95420" aria-hidden="true">
                <path d="M7 2h1v5h5v1H8v5H7V8H2V7h5z" />
                <path d="M5 3l2.500-3L10 3zM5 12l2.500 3 2.500-3zM3 5L0 7.500 3 10zM12 5l3 2.500-3 2.500z" />
              </svg>
            </Segment>
            <Segment $width={143} $pad={10}>
              <button aria-label="Zoom out">
                <svg width="8" height="8" viewBox="0 0 8 8" aria-hidden="true">
                  <path d="M0 4h8" stroke="#4d4d4d" strokeWidth="2" />
                </svg>
              </button>
              <ZoomSlider
                type="range"
                aria-label="Zoom"
                value={zoom}
                onChange={(e) => setZoom(Number(e.target.value))}
              />
              <button aria-label="Zoom in">
                <svg width="8" height="8" viewBox="0 0 8 8" aria-hidden="true">
                  <path d="M0 4h8M4 0v8" stroke="#4d4d4d" strokeWidth="2" />
                </svg>
              </button>
            </Segment>
            <Segment $open $width={48} $pad={10}>69%</Segment>
          </StatusBar>
        </Window>
      </Workspace>

      <Pointer width="18" height="26" viewBox="0 0 18 26" aria-hidden="true">
        <path d="M1 1v19l5-4 4 8 3-1-3-8h6z" fill="#2e2e2e" stroke="#ffffff" />
      </Pointer>
    </Desktop>
  );
}

export default App;
